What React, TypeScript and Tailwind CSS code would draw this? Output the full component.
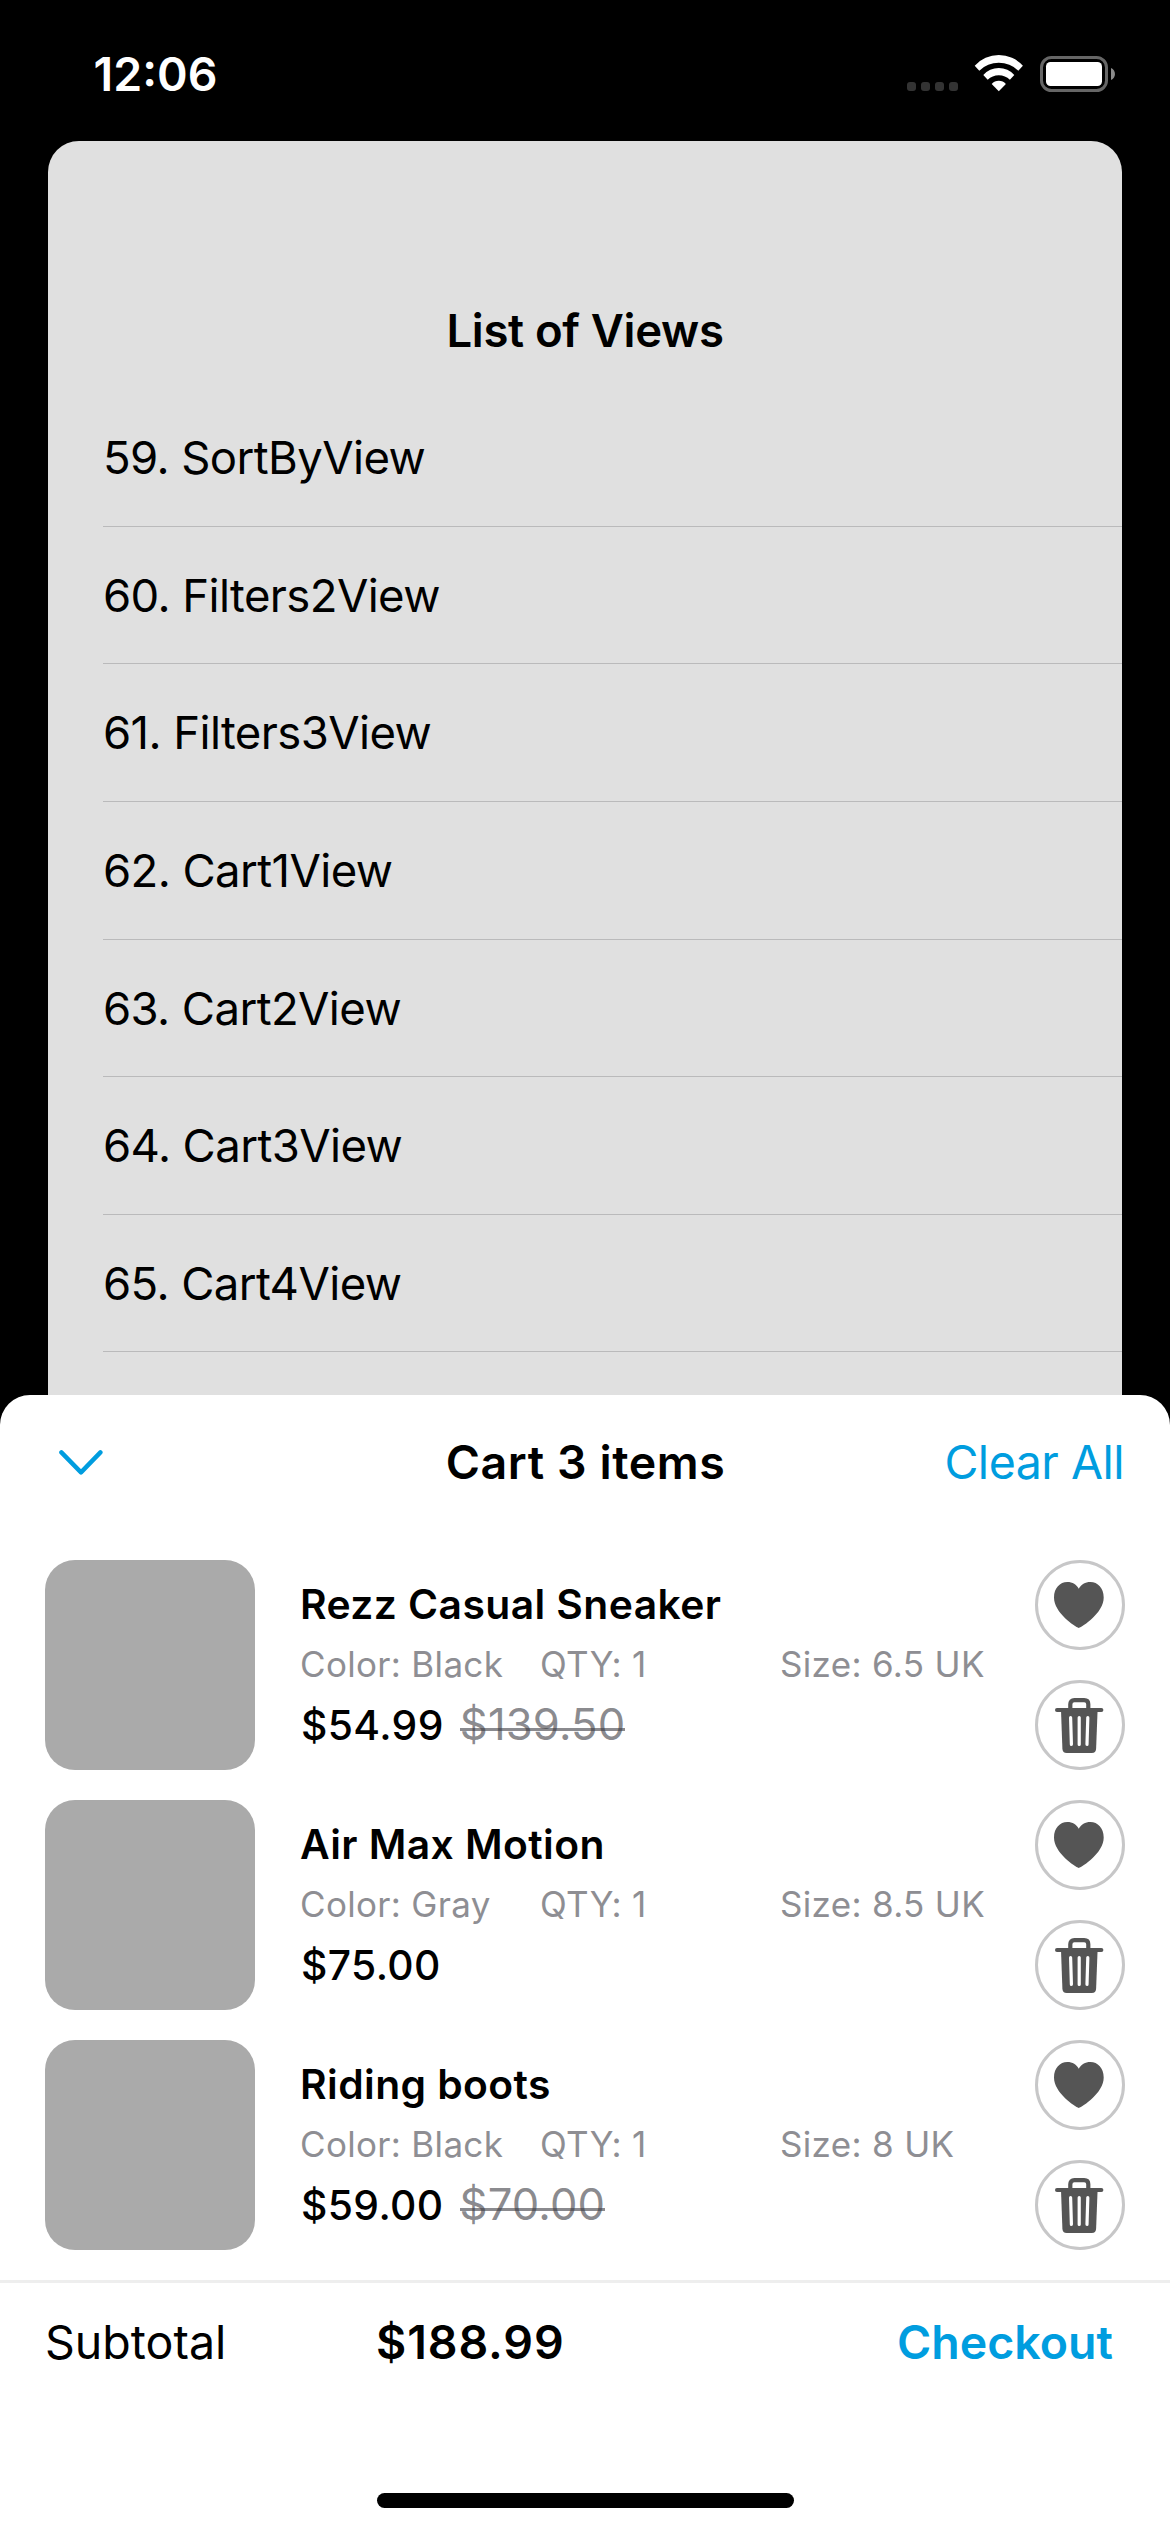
type CartItem = {
  name: string;
  color: string;
  size: string;
  price: string;
  oldPrice?: string;
};

const views = [
  "59. SortByView",
  "60. Filters2View",
  "61. Filters3View",
  "62. Cart1View",
  "63. Cart2View",
  "64. Cart3View",
  "65. Cart4View",
];

const items: CartItem[] = [
  { name: "Rezz Casual Sneaker", color: "Black", size: "6.5 UK", price: "$54.99", oldPrice: "$139.50" },
  { name: "Air Max Motion", color: "Gray", size: "8.5 UK", price: "$75.00" },
  { name: "Riding boots", color: "Black", size: "8 UK", price: "$59.00", oldPrice: "$70.00" },
];

function WifiIcon() {
  return (
    <svg width="50" height="37" viewBox="0 0 50 37" fill="#fff">
      <path d="M0.7 10.7A32.5 32.5 0 0 1 48.9 10.7L44.3 15.7A28 28 0 0 0 5.3 15.7Z" />
      <path d="M9.3 20A20.6 20.6 0 0 1 40.3 20L35.9 24.7A15.8 15.8 0 0 0 13.7 24.7Z" />
      <path d="M17.7 29A9.6 9.6 0 0 1 31.9 29L24.8 36.2Z" />
    </svg>
  );
}

function BatteryIcon() {
  return (
    <svg width="76" height="36" viewBox="0 0 76 36">
      <rect x="1.5" y="1.5" width="65" height="33" rx="10" fill="none" stroke="#666" strokeWidth="3" />
      <rect x="6" y="6" width="56" height="24" rx="4.5" fill="#fff" />
      <path d="M71 12C76.3 14 76.3 22 71 24Z" fill="#8b8b8b" />
    </svg>
  );
}

function ChevronDown() {
  return (
    <svg width="44" height="25" viewBox="0 0 44 25" fill="none" stroke="#009ddf" strokeWidth="4.4" strokeLinecap="round" strokeLinejoin="round">
      <path d="M2.4 2.4L22 22.4L41.4 2.4" />
    </svg>
  );
}

function HeartIcon() {
  return (
    <svg width="50" height="46" viewBox="0 0 50 46" fill="#555">
      <path d="M24.8 46C21 44.5 0 31 0 15.5C0 6 6 0 13.3 0C18.5 0 22.6 2.7 24.8 6.8C27 2.7 31.2 0 36.4 0C43.7 0 49.7 6 49.7 15.5C49.7 31 28.7 44.5 24.8 46Z" />
    </svg>
  );
}

function TrashIcon() {
  return (
    <svg width="49" height="55" viewBox="0 0 49 55">
      <path d="M15.3 12V6.2Q15.3 2.1 19.4 2.1H29.2Q33.3 2.1 33.3 6.2V12" fill="none" stroke="#555" strokeWidth="4.2" />
      <rect x="0" y="10" width="48.4" height="4" rx="2" fill="#555" />
      <path d="M6 12H42.6L41.1 50.8Q40.9 55 36.8 55H11.7Q7.6 55 7.4 50.8Z" fill="#555" />
      <path d="M15.6 19.6L16.4 46.4M24.2 19.6V46.4M32.8 19.6L32 46.4" fill="none" stroke="#fff" strokeWidth="3.2" strokeLinecap="round" />
    </svg>
  );
}

function StatusBar() {
  return (
    <div className="flex h-[141px] items-center justify-between pt-[7px] pr-[54px] pl-[93.5px]">
      <span className="text-[46.5px] leading-none font-semibold text-white">12:06</span>
      <div className="flex items-center">
        <div className="flex h-9 items-end gap-[5px] pb-px">
          {[0, 1, 2, 3].map((dot) => (
            <div key={dot} className="size-[9px] rounded-[3px] bg-[#333]" />
          ))}
        </div>
        <div className="-mt-px ml-4 mr-4">
          <WifiIcon />
        </div>
        <BatteryIcon />
      </div>
    </div>
  );
}

function CartRow({ item }: { item: CartItem }) {
  return (
    <li className="flex h-[210px]">
      <div className="size-[210px] rounded-[30px] bg-[#aaa]" />
      <div className="ml-[45px] flex w-[735px] flex-col">
        <h3 className="flex h-[90px] items-center text-[40.8px] font-semibold tracking-[0.43px] whitespace-nowrap">{item.name}</h3>
        <div className="grid h-[30px] grid-cols-[240px_240px_1fr] items-center pb-px text-[35px] leading-[29px] tracking-[0.32px] whitespace-nowrap text-[#8e8e93]">
          <span>Color: {item.color}</span>
          <span>QTY: 1</span>
          <span>Size: {item.size}</span>
        </div>
        <div className="flex h-[90px] items-center gap-[16px] pl-px text-[40.8px] leading-none font-medium tracking-[0.4px]">
          <span>{item.price}</span>
          {item.oldPrice && (
            <span className="relative text-[43.6px] font-normal tracking-[0.15px] text-[#3c3c43]/60">
              {item.oldPrice}
              <span className="absolute inset-x-0 top-[25px] h-[3px] bg-[#3c3c43]/60" />
            </span>
          )}
        </div>
      </div>
      <div className="flex flex-col gap-[30px]">
        <button className="flex size-[90px] items-center justify-center rounded-full border-[3px] border-[#c7c7c8] pr-[2px]">
          <HeartIcon />
        </button>
        <button className="flex size-[90px] items-center justify-center rounded-full border-[3px] border-[#c7c7c8] pr-[1px]">
          <TrashIcon />
        </button>
      </div>
    </li>
  );
}

export default function App() {
  return (
    <main className="flex h-[2532px] w-[1170px] flex-col overflow-hidden bg-black font-[Inter,sans-serif] text-black">
      <StatusBar />

      <section className="mx-12 h-[1254px] overflow-hidden rounded-t-[31px] bg-[#e0e0e0]">
        <h1 className="flex h-[247.9px] items-center justify-center pt-[132px] text-[45.5px] leading-none font-semibold tracking-[-0.33px]">
          List of Views
        </h1>
        <ul className="pl-[55px]">
          {views.map((view) => (
            <li key={view} className="flex h-[137.66px] items-center border-b border-[#bababb] pt-px text-[45.5px] leading-none tracking-[-0.6px]">
              {view}
            </li>
          ))}
        </ul>
      </section>

      <section className="flex h-[1137px] flex-col rounded-t-[30px] bg-white">
        <header className="grid h-[135px] grid-cols-3 items-center pr-[46px] pl-[59px] text-[46.5px] leading-none">
          <button className="justify-self-start">
            <ChevronDown />
          </button>
          <h2 className="-ml-3 justify-self-center font-semibold tracking-[0.57px] whitespace-nowrap">Cart 3 items</h2>
          <button className="justify-self-end tracking-[-0.5px] text-[#009ddf]">Clear All</button>
        </header>

        <ul className="flex flex-col gap-[30px] px-[45px] py-[30px]">
          {items.map((item) => (
            <CartRow key={item.name} item={item} />
          ))}
        </ul>

        <footer className="flex h-[121px] items-center border-t-[3px] border-[#eee] pr-[57px] pl-[45px] text-[46.5px] leading-none">
          <span className="w-[331px]">Subtotal</span>
          <span className="font-semibold tracking-[0.92px]">$188.99</span>
          <button className="ml-auto font-semibold text-[#009ddf]">Checkout</button>
        </footer>

        <div className="mt-auto mb-6 h-[15px] w-[417px] self-center rounded-full bg-black" />
      </section>
    </main>
  );
}
